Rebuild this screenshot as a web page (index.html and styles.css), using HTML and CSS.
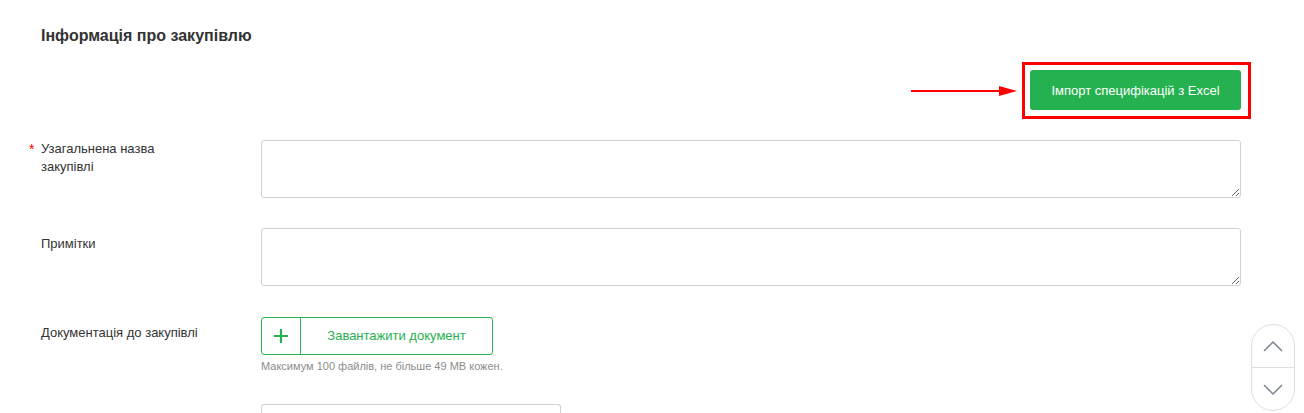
FILE: index.html
```html
<!DOCTYPE html>
<html lang="uk">
<head>
<meta charset="utf-8">
<title>Інформація про закупівлю</title>
<link rel="stylesheet" href="styles.css">
</head>
<body>
<div class="page">
  <h2 class="title">Інформація про закупівлю</h2>
  <div class="actions">
    <svg class="arrow" width="106" height="12" viewBox="0 0 106 12" aria-hidden="true">
      <line x1="0" y1="6" x2="92" y2="6" stroke="#f00" stroke-width="2"/>
      <polygon points="88,1 106,6 88,11" fill="#f00"/>
    </svg>
    <div class="highlight">
      <button class="btn-import" type="button">Імпорт специфікацій з Excel</button>
    </div>
  </div>

  <div class="row">
    <label class="label label-first"><span class="req">*</span>Узагальнена назва<br>закупівлі</label>
    <div class="control"><textarea class="area"></textarea></div>
  </div>

  <div class="row">
    <label class="label">Примітки</label>
    <div class="control"><textarea class="area"></textarea></div>
  </div>

  <div class="row row-upload">
    <label class="label">Документація до закупівлі</label>
    <div class="control">
      <button class="upload" type="button">
        <span class="upload-plus">
          <svg width="16" height="16" viewBox="0 0 16 16" aria-hidden="true"><path d="M8 1v14M1 8h14" stroke="#25b14f" stroke-width="2.2" fill="none"/></svg>
        </span>
        <span class="upload-text">Завантажити документ</span>
      </button>
      <div class="hint">Максимум 100 файлів, не більше 49 MB кожен.</div>
    </div>
  </div>

  <div class="row row-last">
    <div class="label"></div>
    <div class="control"><div class="select-stub"></div></div>
  </div>
</div>

<div class="scroller">
  <button class="scroll-btn" type="button" aria-label="Вгору">
    <svg width="20" height="11" viewBox="0 0 20 11"><polyline points="1,10 10,1 19,10" fill="none" stroke="#7d8694" stroke-width="1.5"/></svg>
  </button>
  <button class="scroll-btn scroll-btn-down" type="button" aria-label="Вниз">
    <svg width="20" height="11" viewBox="0 0 20 11"><polyline points="1,1 10,10 19,1" fill="none" stroke="#7d8694" stroke-width="1.5"/></svg>
  </button>
</div>
</body>
</html>
```

FILE: styles.css
```css
html, body {
  margin: 0;
  padding: 0;
  background: #fff;
  overflow: hidden;
}

body {
  font-family: "Liberation Sans", Arial, sans-serif;
  color: #333;
  font-size: 13px;
  height: 413px;
}

.page {
  width: 1200px;
  padding: 26px 0 0 41px;
}

.title {
  margin: 0;
  font-size: 16px;
  line-height: 20px;
  font-weight: bold;
  color: #333;
}

.actions {
  display: flex;
  justify-content: flex-end;
  align-items: center;
  gap: 5px;
  margin-top: 16px;
  margin-right: -10px;
}

.arrow {
  display: block;
}

.highlight {
  border: 3px solid #f00;
  padding: 5px 7px 6px 5px;
  display: flex;
}

.btn-import {
  width: 211px;
  height: 40px;
  border: none;
  border-radius: 3px;
  background: #25b14f;
  color: #fff;
  font-family: "Liberation Sans", Arial, sans-serif;
  font-size: 13px;
  padding: 0;
  cursor: pointer;
}

.row {
  display: flex;
  margin-top: 21px;
}

.row + .row {
  margin-top: 30px;
}

.row.row-upload {
  margin-top: 31px;
}

.row.row-last {
  margin-top: 31px;
}

.label {
  position: relative;
  width: 220px;
  flex: none;
  font-size: 13px;
  line-height: 18px;
  color: #333;
  padding-top: 7px;
}

.row-last .label {
  padding-top: 0;
}

.label-first {
  padding-top: 0;
}

.req {
  position: absolute;
  left: -12px;
  top: 0;
  color: #f00;
  font-size: 14px;
}

.control {
  width: 980px;
}

.area {
  display: block;
  box-sizing: border-box;
  width: 980px;
  height: 58px;
  margin: 0;
  border: 1px solid #cfd2d9;
  border-radius: 3px;
  background: #fff;
  font-family: inherit;
  font-size: 13px;
}

.upload {
  display: flex;
  box-sizing: border-box;
  width: 232px;
  height: 38px;
  padding: 0;
  border: 1px solid #2db24f;
  border-radius: 3px;
  background: #fff;
  cursor: pointer;
  font-family: "Liberation Sans", Arial, sans-serif;
}

.upload-plus {
  width: 38px;
  flex: none;
  align-self: stretch;
  border-right: 1px solid #2db24f;
  display: flex;
  align-items: center;
  justify-content: center;
}

.upload-plus svg {
  display: block;
}

.upload-text {
  flex: 1;
  color: #25b14f;
  font-size: 13px;
  line-height: 36px;
  text-align: center;
}

.hint {
  margin-top: 4px;
  font-size: 11px;
  line-height: 14px;
  color: #8c8c8c;
}

.select-stub {
  box-sizing: border-box;
  width: 300px;
  height: 9px;
  border: 1px solid #cfd2d9;
  border-bottom: none;
  border-radius: 3px 3px 0 0;
}

.scroller {
  position: fixed;
  left: 1251px;
  top: 324px;
  width: 44px;
  height: 87px;
  box-sizing: border-box;
  border: 1px solid #dcdfe4;
  border-radius: 22px;
  background: #fff;
  display: flex;
  flex-direction: column;
  overflow: hidden;
}

.scroll-btn {
  flex: 1;
  border: none;
  background: transparent;
  padding: 0;
  display: flex;
  align-items: center;
  justify-content: center;
  cursor: pointer;
}

.scroll-btn-down {
  border-top: 1px solid #dcdfe4;
}
```
